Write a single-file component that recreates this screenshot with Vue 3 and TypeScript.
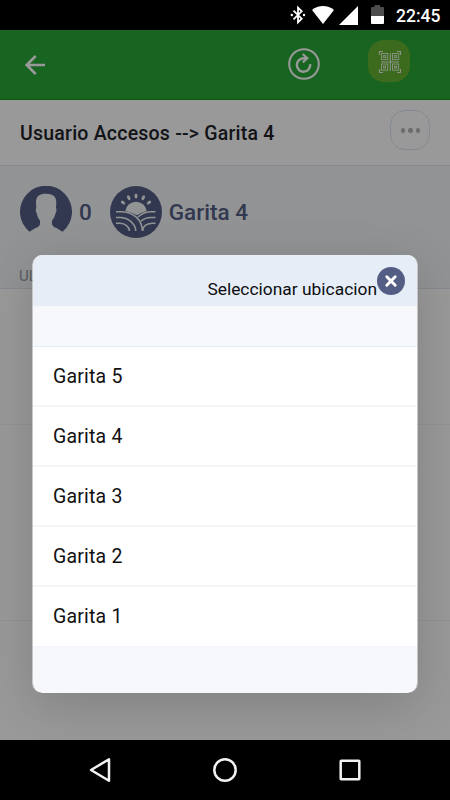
<script setup lang="ts">
import { ref } from 'vue'

const locations = ref<string[]>(['Garita 5', 'Garita 4', 'Garita 3', 'Garita 2', 'Garita 1'])
const open = ref(true)
const selected = ref('Garita 4')
const rays: number[] = [-60, -30, 0, 30, 60]
const qrCells = [
  { x: 3.5, y: 3.5 },
  { x: 14.5, y: 3.5 },
  { x: 3.5, y: 14 },
  { x: 14.5, y: 14 },
]
</script>

<template>
  <div class="phone">
    <header class="status">
      <svg class="bt" viewBox="0 0 16 20" width="16" height="20">
        <path d="M3.5 5.7 L11.7 13.7 L8 17.4 V2.6 L11.7 6.3 L3.5 14.3" fill="none" stroke="#fff" stroke-width="1.8" />
        <circle cx="1.8" cy="10" r="1.2" fill="#fff" />
        <circle cx="14" cy="10" r="1.2" fill="#fff" />
      </svg>
      <svg class="wifi" viewBox="0 0 22 18" width="22" height="18">
        <path d="M0 4 C6 -1.2 16 -1.2 22 4 L11 18 Z" fill="#fff" />
      </svg>
      <svg class="signal" viewBox="0 0 19 19" width="19" height="19">
        <path d="M19 0 V19 H0 Z" fill="#fff" />
      </svg>
      <svg class="battery" viewBox="0 0 13 19" width="13" height="19">
        <path d="M3.5 0 H9 V2 H12 Q13 2 13 3 V11 H0 V3 Q0 2 1 2 H3.5 Z" fill="#4d4d4d" />
        <path d="M0 11 H13 V18 Q13 19 12 19 H1 Q0 19 0 18 Z" fill="#fff" />
      </svg>
      <span class="clock">22:45</span>
    </header>

    <main class="screen">
      <div class="toolbar">
        <svg class="back" viewBox="0 0 20 20" width="20" height="20">
          <path d="M20 10 H2 M10.7 1 L1.7 10 L10.7 19" fill="none" stroke="#fff" stroke-width="2.6" />
        </svg>
        <svg class="refresh" viewBox="0 0 32 32" width="32" height="32">
          <circle cx="16" cy="16" r="14.8" fill="none" stroke="#fff" stroke-width="2" />
          <path d="M22.2 16.2 A6.7 6.7 0 1 1 15.5 10.3 H19" fill="none" stroke="#fff" stroke-width="2.4" />
          <path d="M14.8 6 L19.3 10.2 L14.8 14.4" fill="none" stroke="#fff" stroke-width="2.2" />
        </svg>
        <button class="qr" type="button">
          <svg viewBox="0 0 24 24" width="24" height="24" fill="none" stroke="#fff" stroke-opacity=".85">
            <path d="M1.5 5 V1.5 H5 M19 1.5 H22.5 V5 M22.5 19 V22.5 H19 M5 22.5 H1.5 V19" stroke-width="1.1" />
            <path d="M12.3 3 V21 M3 12 H21" stroke-width="1" />
            <g v-for="(c, i) in qrCells" :key="i">
              <rect :x="c.x" :y="c.y" width="6.2" height="6.2" stroke-width="0.9" />
              <rect :x="c.x + 2.1" :y="c.y + 2.1" width="2" height="2" stroke-width="0.9" />
            </g>
          </svg>
        </button>
      </div>

      <section class="heading">
        <h1>Usuario Accesos --&gt; {{ selected }}</h1>
        <button class="more" type="button"><i></i><i></i><i></i></button>
      </section>

      <section class="summary">
        <div class="stats">
          <svg viewBox="0 0 52 52" width="52" height="52">
            <path d="M9.5 45.8 A26 26 0 1 1 42.5 45.8 L37 42.3 Q33 41 32 38.5 V34.5 Q34.5 32 35.5 27.5 Q37.2 24 36 22 L36.3 17 C36.5 10.5 33 7.7 26 7.7 C19 7.7 15.7 10.5 16 17 L16.3 22 Q15 24 16.7 27.5 Q17.5 32 20 34.5 V38.5 Q19 41 15 42.3 Z" fill="#545e84" />
          </svg>
          <span class="value">0</span>
          <svg class="farm" viewBox="0 0 52 52" width="52" height="52">
            <circle cx="26" cy="26" r="26" fill="#545e84" />
            <ellipse v-for="a in rays" :key="a" cx="26" cy="10" rx="1.5" ry="2.5" fill="#f3f5f8" :transform="`rotate(${a * 0.9} 26 26)`" />
            <path d="M15.3 25 A10.8 10.8 0 0 1 36.7 25 Q31 26.5 27 29.3 Q21 25.7 15.3 25 Z" fill="#f3f5f8" />
            <g fill="none" stroke="#f3f5f8" stroke-width="1.6">
              <path d="M6 25.7 H12 C24 26 32 34 32.5 45" />
              <path d="M6 31.5 H11 C19 32 25.5 38 25.8 45" />
              <path d="M6 37.3 H10 C15 37.5 19.3 40.5 19.5 45" />
              <path d="M45.5 25.7 H40 Q33 26 28 31" />
              <path d="M45.5 31.5 H41 Q35 31.5 31 35.2" />
              <path d="M45.5 37.3 H42 Q33 38 32.5 45" />
            </g>
          </svg>
          <span class="value">{{ selected }}</span>
        </div>
        <span class="caption">ULTIMOS</span>
      </section>
      <div class="panel first"></div>
      <div class="panel second"></div>

      <div v-if="open" class="backdrop">
        <section class="dialog" role="dialog">
          <header class="dialog-head">
            <span class="title">Seleccionar ubicacion</span>
            <button class="close" type="button" @click="open = false">
              <svg viewBox="0 0 28 28" width="28" height="28">
                <path d="M9.8 9.8 L18.2 18.2 M18.2 9.8 L9.8 18.2" stroke="#fff" stroke-width="2.9" stroke-linecap="round" />
              </svg>
            </button>
          </header>
          <ul>
            <li v-for="name in locations" :key="name" @click="selected = name">{{ name }}</li>
          </ul>
        </section>
      </div>
    </main>

    <nav class="navbar">
      <svg viewBox="0 0 24 26" width="24" height="26"><path d="M21 2.3 V23.7 L3 13 Z" /></svg>
      <svg viewBox="0 0 24 26" width="24" height="26"><circle cx="12" cy="13" r="10.7" /></svg>
      <svg viewBox="0 0 24 26" width="24" height="26"><rect x="2.7" y="3.7" width="18.6" height="18.6" rx=".5" /></svg>
    </nav>
  </div>
</template>

<style>
body {
  margin: 0;
  overflow: hidden;
}
</style>

<style scoped>
.phone {
  width: 450px;
  height: 800px;
  display: flex;
  flex-direction: column;
  overflow: hidden;
  background: #000;
  font-family: Roboto, "Noto Sans", sans-serif;
}
* {
  box-sizing: border-box;
}
button {
  padding: 0;
  border: 0;
  cursor: pointer;
}
svg {
  display: block;
  flex: none;
}
.status {
  height: 30px;
  flex: none;
  display: flex;
  align-items: flex-start;
  justify-content: flex-end;
  padding: 5px 10px 0 0;
}
.bt {
  margin-right: 6px;
}
.wifi {
  margin: 1px 5px 0 0;
}
.signal {
  margin: 1px 13px 0 0;
}
.battery {
  margin-right: 12px;
}
.clock {
  width: 44px;
  font-size: 17.5px;
  line-height: 22px;
  font-weight: 500;
  color: #fff;
  white-space: nowrap;
}
.screen {
  position: relative;
  flex: 1;
  display: flex;
  flex-direction: column;
  background: #fff;
  overflow: hidden;
}
.toolbar {
  height: 70px;
  flex: none;
  display: flex;
  align-items: flex-start;
  padding: 10px 40px 0 25px;
  background: #28a737;
  border-bottom: 1px solid #169018;
}
.back {
  margin-top: 15px;
}
.refresh {
  margin: 8px 48px 0 auto;
}
.qr {
  width: 42px;
  height: 42px;
  display: flex;
  align-items: center;
  justify-content: center;
  padding: 2px 0 0 1px;
  border-radius: 16px;
  background: #66b332;
  box-shadow: 0 3px 6px rgba(60, 170, 50, 0.3);
}
.heading {
  height: 66px;
  flex: none;
  display: flex;
  align-items: flex-start;
  justify-content: space-between;
  padding: 10px 20px 0;
  border-bottom: 1px solid #e2e8f0;
}
h1 {
  margin: 12px 0 0;
  font-size: 19.5px;
  line-height: 24px;
  font-weight: 500;
  letter-spacing: 0.22px;
  color: #202228;
  white-space: nowrap;
}
.more {
  width: 40px;
  height: 40px;
  display: flex;
  align-items: center;
  justify-content: center;
  gap: 3px;
  padding: 1px 0 0 1px;
  border: 1px solid #dbe6f2;
  border-radius: 15px;
  background: #fff;
}
.more i {
  width: 4.5px;
  height: 4.5px;
  border-radius: 50%;
  background: #b5b5b5;
}
.summary {
  height: 123px;
  flex: none;
  padding: 20px 20px 0;
  background: #f3f5f8;
  border-bottom: 1px solid #dde7ef;
}
.stats {
  display: flex;
  align-items: center;
}
.value {
  margin: 0 0 0 7px;
  font-size: 22.5px;
  line-height: 28px;
  font-weight: 500;
  color: #545e84;
}
.farm {
  margin-left: 18px;
}
.caption {
  display: block;
  margin: 29px 0 0 -1px;
  font-size: 15px;
  line-height: 18px;
  color: #979ba5;
}
.panel {
  flex: none;
  border-bottom: 1px solid #f3f4f5;
}
.first {
  height: 136px;
}
.second {
  height: 196px;
}
.backdrop {
  position: absolute;
  inset: 0;
  display: flex;
  align-items: flex-start;
  justify-content: center;
  padding-top: 225px;
  background: rgba(0, 0, 0, 0.4);
}
.dialog {
  width: 386px;
  height: 437.5px;
  overflow: hidden;
  border: solid rgba(255, 255, 255, 0.5);
  border-width: 0 1px;
  border-radius: 10px;
  background: #f6f8fb;
  background-clip: padding-box;
  box-shadow: 0 12px 50px rgba(0, 0, 0, 0.16);
}
.dialog-head {
  height: 51px;
  display: flex;
  justify-content: flex-end;
  align-items: flex-start;
  padding: 12px 12px 0 0;
  background: #e6edf7;
}
.title {
  margin-top: 12px;
  font-size: 17.4px;
  line-height: 20px;
  color: #0d0d10;
  white-space: nowrap;
}
.close {
  width: 28px;
  height: 28px;
  border-radius: 50%;
  background: #545e84;
}
ul {
  list-style: none;
  margin: 40px 0 0;
  padding: 0;
  border-top: 1px solid #e5ecf5;
  background: #fff;
}
li {
  height: 60px;
  padding-left: 20px;
  font-size: 19.5px;
  line-height: 60px;
  letter-spacing: 0.2px;
  color: #111;
  border-bottom: 2px solid #f4f5f6;
}
li:last-child {
  border-bottom: 1px solid #f1f4f8;
}
.navbar {
  height: 60px;
  flex: none;
  display: flex;
  align-items: center;
  justify-content: center;
  gap: 101px;
}
.navbar path,
.navbar circle,
.navbar rect {
  fill: none;
  stroke: #f2f2f2;
  stroke-width: 2.5;
  stroke-linejoin: round;
}
</style>
